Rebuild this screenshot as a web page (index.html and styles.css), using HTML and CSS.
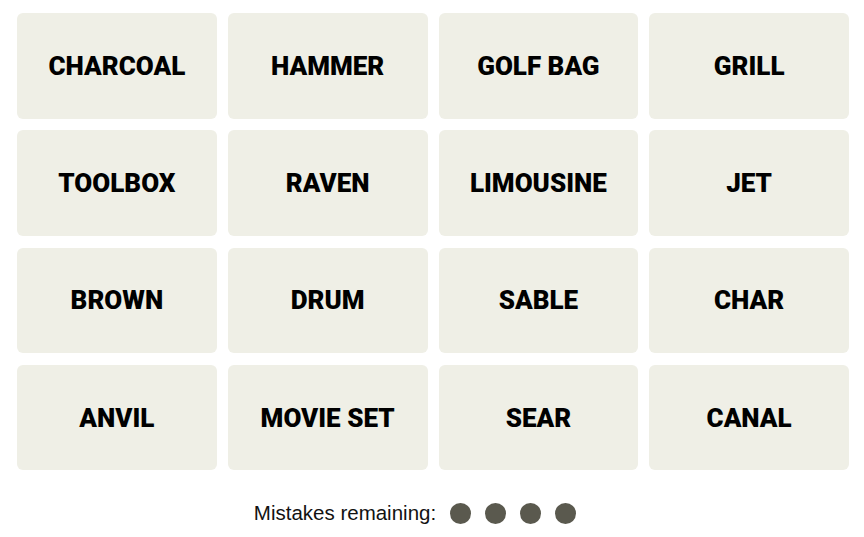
FILE: index.html
```html
<!DOCTYPE html>
<html lang="en">
<head>
    <meta charset="UTF-8">
    <meta name="viewport" content="width=device-width, initial-scale=1.0">
    <title>Connections</title>
    <link rel="stylesheet" href="styles.css">
</head>
<body>
    <div class="board">
        <div class="grid">
            <div class="tile">CHARCOAL</div>
            <div class="tile">HAMMER</div>
            <div class="tile">GOLF BAG</div>
            <div class="tile">GRILL</div>
            <div class="tile">TOOLBOX</div>
            <div class="tile">RAVEN</div>
            <div class="tile">LIMOUSINE</div>
            <div class="tile">JET</div>
            <div class="tile">BROWN</div>
            <div class="tile">DRUM</div>
            <div class="tile">SABLE</div>
            <div class="tile">CHAR</div>
            <div class="tile">ANVIL</div>
            <div class="tile">MOVIE SET</div>
            <div class="tile">SEAR</div>
            <div class="tile">CANAL</div>
        </div>
        <div class="mistakes">
            <span class="label">Mistakes remaining:</span>
            <span class="dots">
                <span class="dot"></span>
                <span class="dot"></span>
                <span class="dot"></span>
                <span class="dot"></span>
            </span>
        </div>
    </div>
</body>
</html>
```

FILE: styles.css
```css
body {
    margin: 0;
    background: #ffffff;
    font-family: "Liberation Sans", Arial, sans-serif;
}
.board {
    padding: 13px 15px 0 17px;
}
.grid {
    display: grid;
    grid-template-columns: repeat(4, 1fr);
    grid-auto-rows: 105.5px;
    column-gap: 11px;
    row-gap: 11.8px;
    width: 832px;
}
.tile {
    display: flex;
    align-items: center;
    justify-content: center;
    background-color: #efefe6;
    border-radius: 6px;
    font-family: Roboto, "Liberation Sans", sans-serif;
    font-weight: 900;
    font-size: 26px;
    color: #000000;
}
.mistakes {
    display: flex;
    align-items: center;
    justify-content: center;
    margin-top: 31px;
    padding-right: 36px;
    width: 832px;
    box-sizing: border-box;
}
.label {
    font-size: 20.5px;
    color: #121212;
    margin-right: 14px;
}
.dots {
    display: flex;
    gap: 14px;
}
.dot {
    width: 21px;
    height: 21px;
    border-radius: 50%;
    background-color: #5a594e;
}
```
